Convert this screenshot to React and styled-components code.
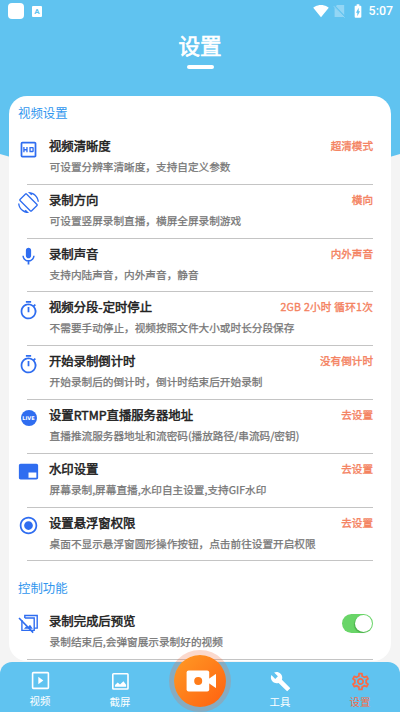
import React from "react";
import styled, { createGlobalStyle, css } from "styled-components";
import {
  MdBatteryChargingFull,
  MdBrandingWatermark,
  MdBuild,
  MdMic,
  MdOutlineHd,
  MdOutlineSettings,
  MdOutlineTimer,
  MdRadioButtonChecked,
  MdScreenRotation,
  MdSignalWifi4Bar,
} from "react-icons/md";

const GlobalStyle = createGlobalStyle`
  * {
    box-sizing: border-box;
  }

  body {
    margin: 0;
    font-family: "Noto Sans CJK SC", sans-serif;
    background-color: #f4f4f4;
  }
`;

const Screen = styled.div`
  position: relative;
  display: flex;
  flex-direction: column;
  width: 400px;
  height: 712px;
  overflow: hidden;
`;

// The blue curve behind the header and the top of the card
const Backdrop = styled.svg`
  position: absolute;
  top: 0;
  left: 0;
  z-index: -1;
`;

const StatusBar = styled.div`
  display: flex;
  align-items: center;
  height: 22px;
  padding: 0 7px 0 8px;
  color: white;
`;

const AppDot = styled.span`
  width: 16px;
  height: 16px;
  margin-right: 8px;
  border-radius: 4px;
  background-color: white;
`;

const Keyboard = styled.span`
  width: 10px;
  height: 11px;
  border-radius: 1px;
  background-color: white;
  color: #60c3f0;
  font: bold 8px/11px Roboto, sans-serif;
  text-align: center;
`;

const StatusIcons = styled.div`
  display: flex;
  align-items: center;
  gap: 4px;
  margin-left: auto;
`;

const Clock = styled.span`
  margin-left: -1px;
  font: 500 12.4px/22px Roboto, sans-serif;
`;

const Header = styled.header`
  display: flex;
  flex-direction: column;
  align-items: center;
  height: 74px;
  padding-top: 6px;
  color: white;
`;

const Heading = styled.h1`
  margin: 0;
  font-size: 21.6px;
  font-weight: 400;
  line-height: 34px;
  -webkit-text-stroke: 0.7px currentColor;
`;

const Underline = styled.span`
  width: 27px;
  height: 4px;
  margin-top: 3px;
  border-radius: 2px;
  background-color: white;
`;

const Card = styled.main`
  flex: none;
  height: 565px;
  margin: 0 9px;
  border-radius: 18px;
  background-color: white;
  overflow: hidden;
`;

const SectionTitle = styled.h2`
  height: ${props => (props.$spaced ? "45px" : "35px")};
  margin: 0;
  padding: ${props => (props.$spaced ? "10px" : "0")} 0 0 9px;
  color: #3096ee;
  font-size: 12.4px;
  font-weight: 400;
  line-height: 35px;
`;

const Row = styled.div`
  display: grid;
  grid-template-columns: 22px 324px;
  height: 53.8px;
  margin: 0 18px;
  border-bottom: 1px solid #c4c4c4;
`;

const RowIcon = styled.div`
  display: flex;
  align-items: center;
  justify-content: center;
  width: 22px;
  height: 36px;
  margin-left: -9.5px;
  color: #2f6df0;

  & svg {
    flex: none;
  }
`;

const RowBody = styled.div`
  padding-top: 5px;
`;

const RowTop = styled.div`
  display: flex;
  justify-content: space-between;
  height: 20px;
`;

const Title = styled.div`
  color: #222;
  font-size: 12.35px;
  font-weight: 400;
  line-height: 20px;
  white-space: nowrap;
  -webkit-text-stroke: 0.5px currentColor;
`;

const Detail = styled.div`
  margin: 1px 0 0 0.6px;
  color: #757575;
  font-size: 10.65px;
  line-height: 20px;
  white-space: nowrap;
  -webkit-text-stroke: 0.25px currentColor;
`;

const Value = styled.div`
  color: #f4825f;
  font-size: 10.6px;
  line-height: 19px;
  letter-spacing: ${props => (props.$wide ? "0.25px" : "0")};
  white-space: nowrap;
  -webkit-text-stroke: 0.35px currentColor;
`;

const Toggle = styled.div`
  display: flex;
  flex: none;
  justify-content: flex-end;
  width: 31px;
  height: 19px;
  margin-top: 3px;
  padding: 1px;
  border-radius: 10px;
  background-color: #69d568;

  &::after {
    content: "";
    width: 17px;
    height: 17px;
    border-radius: 50%;
    background-color: white;
    box-shadow: -1px 1px 1px rgba(0, 90, 0, 0.3);
  }
`;

const LiveBadge = styled.span`
  flex: none;
  width: 16px;
  height: 16px;
  border-radius: 50%;
  background-color: #2f6df0;
  color: white;
  font: bold 5px/16px "DejaVu Sans", sans-serif;
  text-align: center;
`;

const NavBar = styled.nav`
  display: grid;
  grid-template-columns: repeat(5, 80px);
  height: 50px;
  margin-top: 1px;
  border-radius: 12px 12px 0 0;
  background-color: #60c3f0;
`;

const NavItem = styled.div`
  display: flex;
  flex-direction: column;
  align-items: center;
  padding-top: ${props => (props.$raised ? "8px" : "9px")};
  color: white;
  font-size: 10.4px;
  line-height: 20px;

  & svg {
    flex: none;
    width: 21px;
    height: 21px;
  }

  ${props =>
    props.$active &&
    css`
      color: #f96b46;
    `}
`;

const RecordButton = styled.div`
  position: relative;
  display: flex;
  align-items: center;
  justify-content: center;
  justify-self: center;
  width: 52px;
  height: 52px;
  margin-top: -7px;
  border-radius: 50%;
  background: linear-gradient(135deg, #ff9b25, #ff6010);
  box-shadow: 0 0 0 5px rgba(240, 110, 60, 0.26);
`;

const VideoIcon = () => (
  <svg viewBox="0 0 21 21" fill="none" stroke="currentColor">
    <rect x="2.6" y="2.6" width="15.8" height="15.8" rx="0.8" strokeWidth="1.6" />
    <path d="M8.3 6.8v7.4l5-3.7z" fill="currentColor" stroke="none" />
  </svg>
);

const PictureIcon = () => (
  <svg viewBox="0 0 21 21" fill="none" stroke="currentColor">
    <rect x="2.8" y="2.8" width="15.2" height="15.2" rx="0.8" strokeWidth="1.6" />
    <path d="M5 15.8v-1.8l2.7-2.6 2.3 2.2 3.4-3.4 2.7 3.6v2z" fill="currentColor" stroke="none" />
  </svg>
);

const PreviewOffIcon = () => (
  <svg width="22" height="22" viewBox="0 0 22 22" fill="none" stroke="currentColor" strokeWidth="1.4">
    <path d="M6.8 5V2.5h12.4v12.6h-3" />
    <path d="M3.9 7v10.4h12.3V5H6.8" />
    <path d="M1 5l14.2 14.6" strokeWidth="1.6" />
    <path d="M6 15.8l2.2-2.6 1.4 1.2 2.4-2.6 2.8 4z" fill="currentColor" stroke="none" />
  </svg>
);

const CameraIcon = () => (
  <svg width="32" height="22" viewBox="0 0 32 22">
    <rect x="2.6" y="0.6" width="22.6" height="20.8" rx="2" fill="white" />
    <path d="M24.5 9l7-4.8q0.9-0.4 0.9 0.6v12.4q0 1-0.9 0.6L24.5 13z" fill="white" />
    <circle cx="14.2" cy="11" r="4" fill="#ff7c19" />
  </svg>
);

const NoSimIcon = () => (
  <svg width="13" height="14" viewBox="0 0 13 14">
    <path d="M4 1h7.2v12H1.6V3.5z" fill="white" opacity="0.32" />
    <path d="M0.5 1.2l11.5 12" stroke="#60c3f0" strokeWidth="1.8" />
    <path d="M0.8 2.2l10.8 11.4" stroke="white" strokeWidth="0.8" opacity="0.4" />
  </svg>
);

const videoSettings = [
  { title: "视频清晰度", detail: "可设置分辨率清晰度，支持自定义参数", value: "超清模式", icon: <MdOutlineHd size={21} /> },
  { title: "录制方向", detail: "可设置竖屏录制直播，横屏全屏录制游戏", value: "横向", icon: <MdScreenRotation size={21} /> },
  { title: "录制声音", detail: "支持内陆声音，内外声音，静音", value: "内外声音", icon: <MdMic size={21} /> },
  {
    title: "视频分段-定时停止",
    detail: "不需要手动停止，视频按照文件大小或时长分段保存",
    value: "2GB 2小时 循环1次",
    wide: true,
    icon: <MdOutlineTimer size={21} />,
  },
  { title: "开始录制倒计时", detail: "开始录制后的倒计时，倒计时结束后开始录制", value: "没有倒计时", icon: <MdOutlineTimer size={21} /> },
  {
    title: "设置RTMP直播服务器地址",
    detail: "直播推流服务器地址和流密码(播放路径/串流码/密钥)",
    value: "去设置",
    icon: <LiveBadge>LIVE</LiveBadge>,
  },
  { title: "水印设置", detail: "屏幕录制,屏幕直播,水印自主设置,支持GIF水印", value: "去设置", icon: <MdBrandingWatermark size={21} /> },
  { title: "设置悬浮窗权限", detail: "桌面不显示悬浮窗圆形操作按钮，点击前往设置开启权限", value: "去设置", icon: <MdRadioButtonChecked size={21} /> },
];

function Setting({ icon, title, detail, children }) {
  return (
    <Row>
      <RowIcon>{icon}</RowIcon>
      <RowBody>
        <RowTop>
          <Title>{title}</Title>
          {children}
        </RowTop>
        <Detail>{detail}</Detail>
      </RowBody>
    </Row>
  );
}

export default function App() {
  return (
    <>
      <GlobalStyle />
      <Screen>
        <Backdrop width="400" height="220" viewBox="0 0 400 220">
          <path d="M0 0H400V154Q200 215 0 154z" fill="#60c3f0" />
        </Backdrop>

        <StatusBar>
          <AppDot />
          <Keyboard>A</Keyboard>
          <StatusIcons>
            <MdSignalWifi4Bar size={16} />
            <NoSimIcon />
            <MdBatteryChargingFull size={16} />
            <Clock>5:07</Clock>
          </StatusIcons>
        </StatusBar>

        <Header>
          <Heading>设置</Heading>
          <Underline />
        </Header>

        <Card>
          <SectionTitle>视频设置</SectionTitle>
          {videoSettings.map(item => (
            <Setting key={item.title} icon={item.icon} title={item.title} detail={item.detail}>
              <Value $wide={item.wide}>{item.value}</Value>
            </Setting>
          ))}
          <SectionTitle $spaced>控制功能</SectionTitle>
          <Setting icon={<PreviewOffIcon />} title="录制完成后预览" detail="录制结束后,会弹窗展示录制好的视频">
            <Toggle />
          </Setting>
        </Card>

        <NavBar>
          <NavItem $raised>
            <VideoIcon />
            视频
          </NavItem>
          <NavItem>
            <PictureIcon />
            截屏
          </NavItem>
          <RecordButton>
            <CameraIcon />
          </RecordButton>
          <NavItem>
            <MdBuild />
            工具
          </NavItem>
          <NavItem $active>
            <MdOutlineSettings />
            设置
          </NavItem>
        </NavBar>
      </Screen>
    </>
  );
}
